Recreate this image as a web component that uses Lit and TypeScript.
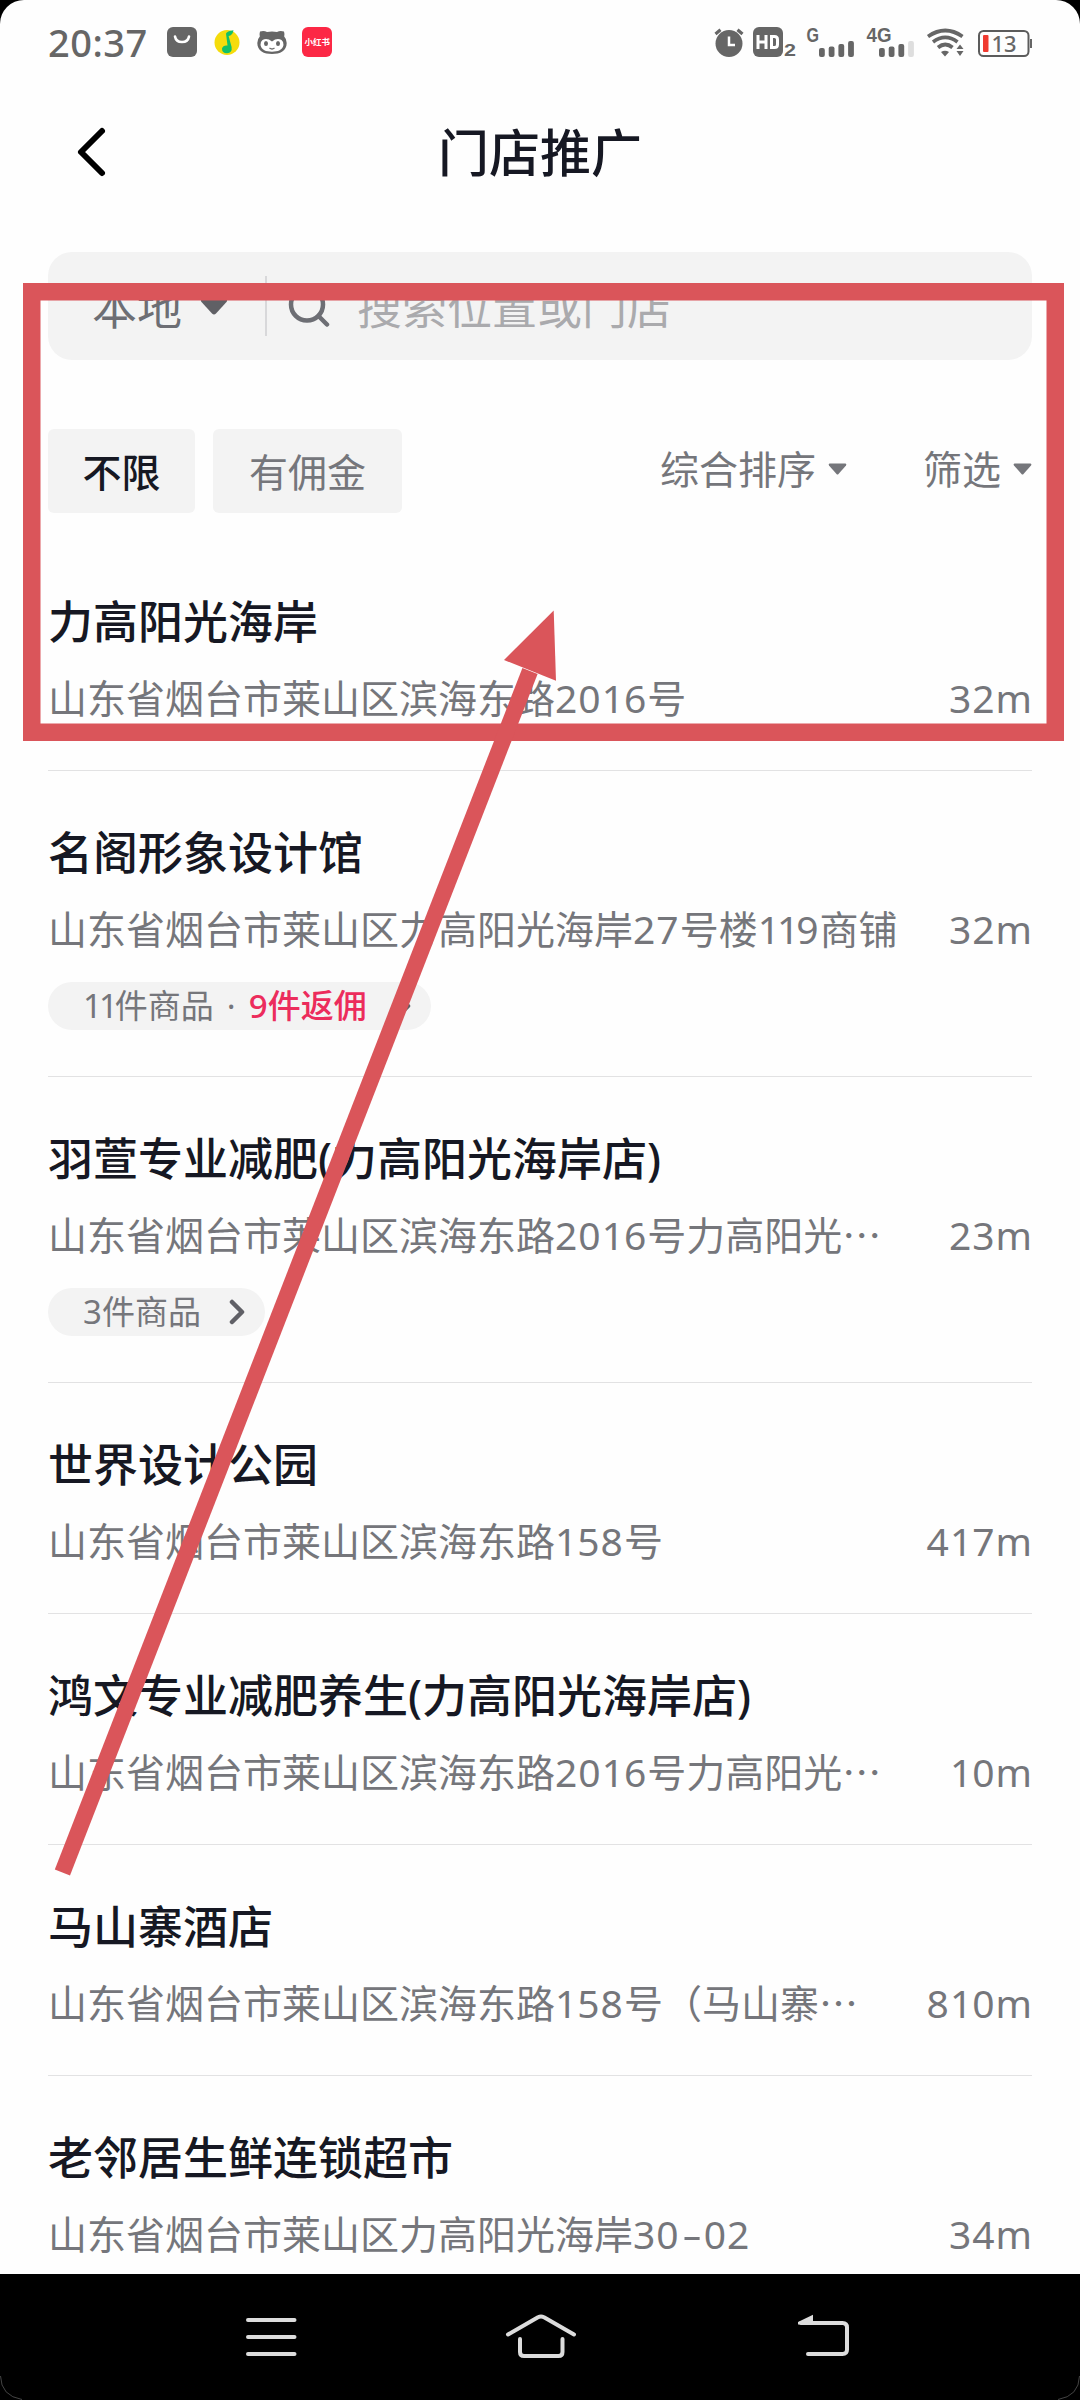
import { LitElement, html, css, svg, nothing } from "lit";
import { customElement, property } from "lit/decorators.js";

interface Store {
  name: string;
  address: string;
  truncated?: boolean;
  distance: string;
  goods?: string;
  rebate?: string;
}

const STORES: Store[] = [
  { name: "力高阳光海岸", address: "山东省烟台市莱山区滨海东路2016号", distance: "32m" },
  { name: "名阁形象设计馆", address: "山东省烟台市莱山区力高阳光海岸27号楼119商铺", distance: "32m", goods: "11件商品", rebate: "9件返佣" },
  { name: "羽萱专业减肥(力高阳光海岸店)", address: "山东省烟台市莱山区滨海东路2016号力高阳光", truncated: true, distance: "23m", goods: "3件商品" },
  { name: "世界设计公园", address: "山东省烟台市莱山区滨海东路158号", distance: "417m" },
  { name: "鸿文专业减肥养生(力高阳光海岸店)", address: "山东省烟台市莱山区滨海东路2016号力高阳光", truncated: true, distance: "10m" },
  { name: "马山寨酒店", address: "山东省烟台市莱山区滨海东路158号（马山寨", truncated: true, distance: "810m" },
  { name: "老邻居生鲜连锁超市", address: "山东省烟台市莱山区力高阳光海岸30-02", distance: "34m" },
];

/** Splits a string so that digit runs, paired ones and dashes get their own tracking. */
const tracked = (text: string) =>
  text.split(/(11|[02-9]+|-)/).filter(Boolean).map((part) =>
    part === "11" ? html`<span class="ones">${part}</span>`
      : part === "-" ? html`<span class="dash">${part}</span>`
        : /^[02-9]/.test(part) ? html`<span class="digits">${part}</span>`
          : part);

@customElement("status-bar")
class StatusBar extends LitElement {
  static styles = css`
    :host { display: flex; height: 84px; padding: 0 48px; align-items: center; justify-content: space-between; color: #666; box-sizing: border-box; }
    .left, .right { display: flex; align-items: center; }
    .time { font: 500 38px/60px "Noto Sans", sans-serif; letter-spacing: .5px; width: 119px; white-space: nowrap; }
    .icon { display: block; flex: none; }
    .t { font-family: "Liberation Sans", sans-serif; font-weight: 700; }
    .cjk { font-family: "Noto Sans CJK SC", sans-serif; font-weight: 700; }
    .pct { font-family: "Noto Sans", sans-serif; font-weight: 500; }
  `;
  render() {
    return html`
      <div class="left">
        <div class="time">20:37</div>
        <svg class="icon" width="165" height="30" viewBox="167 27 165 30">
          <rect x="167" y="27" width="30" height="30" rx="6" fill="#666" />
          <path d="M175 36.500Q176 42 182 42T189 36.500" fill="none" stroke="#fff" stroke-width="2.600" stroke-linecap="round" />
          <circle cx="227" cy="42.500" r="12.500" fill="#f5dc0c" />
          <path d="M226 33.500Q227 31 233.500 30.200Q232.500 35.500 228.600 36L231.600 47Q232.500 53 227 53.300Q221.700 53 222 48.500Q223 45 227.500 45.500Z" fill="#12c068" />
          <path d="M260 31.500Q264 30.200 267 32Q272 31 277 32Q280 30.200 284 31.500Q284.800 34 284.200 36.500Q286.700 39 286.700 43C286.700 51 280 54 272 54S257.300 51 257.300 43Q257.300 39 259.800 36.500Q259.200 34 260 31.500Z" fill="#666" />
          <path d="M272 41.500Q277 37.500 281.500 40Q284 42 283.500 45C282.500 50 278 51.700 272 51.700S261.500 50 260.500 45Q260 42 262.500 40Q267 37.500 272 41.500Z" fill="#fff" />
          <ellipse cx="266" cy="43.500" rx="2" ry="2.600" fill="#666" /><ellipse cx="278" cy="43.500" rx="2" ry="2.600" fill="#666" />
          <path d="M269.500 48Q272 50 274.500 48" fill="none" stroke="#666" stroke-width="1.300" />
          <rect x="302" y="27" width="30" height="30" rx="6" fill="#fc2845" />
          <text class="cjk" x="304.500" y="45.200" font-size="8.500" fill="#fff">小红书</text>
        </svg>
      </div>
      <div class="right">
        <svg class="icon" width="318" height="48" viewBox="714 18 318 48">
          <g fill="#666">
            <circle cx="729" cy="43.500" r="13.500" />
            <path d="M715.500 34L720.500 29.800M742.500 34L737.500 29.800" stroke="#666" stroke-width="3.200" />
            <path d="M729 36.500V45H735" fill="none" stroke="#fff" stroke-width="2.500" />
            <rect x="753" y="27" width="30" height="30" rx="6" />
            <path d="M758 35V49M766 35V49M758 42H766" stroke="#fff" stroke-width="3" />
            <path d="M771.500 36.500H774.500Q777.500 36.500 777.500 39.500V44.500Q777.500 47.500 774.500 47.500H771.500Z" fill="none" stroke="#fff" stroke-width="3" />
            <text class="t" x="784" y="56" font-size="16.500" textLength="12" lengthAdjust="spacingAndGlyphs">2</text>
            <text class="t" x="806.500" y="41.500" font-size="19.500" textLength="12.500" lengthAdjust="spacingAndGlyphs">G</text>
            <text class="t" x="866.500" y="41.500" font-size="19.500" textLength="25" lengthAdjust="spacingAndGlyphs">4G</text>
            ${[819, 879].map((x, n) => [9, 10.5, 13, 16].map((h, i) => svg`
              <rect x=${x + i * 9.7} y=${57 - h} width="5.800" height=${h} rx="2" fill=${n === 1 && i === 3 ? "#dedede" : "#666"} />`))}
            <g fill="none" stroke="#666" stroke-width="3.700">
              <path d="M928 36.500Q945.300 24.500 962.500 36.500" /><path d="M933 42Q945.300 32.800 957.500 42" /><path d="M938 47.500Q945.300 41.500 952.500 47.500" />
            </g>
            <path d="M941 52Q945 49.500 949 52L945 56.500ZM956.500 49L960 44.500L963.500 49ZM956.500 51L960 56L963.500 51Z" />
            <rect x="979" y="31" width="49.500" height="25" rx="4.500" fill="none" stroke="#5c5c5c" stroke-width="2" />
            <rect x="1030" y="39" width="2" height="9" />
            <rect x="983" y="35" width="5.500" height="17" rx="1" fill="#f03a30" />
            <text class="pct" x="991.500" y="52" font-size="22.500" textLength="25" lengthAdjust="spacingAndGlyphs">13</text>
          </g>
        </svg>
      </div>`;
  }
}

@customElement("store-row")
class StoreRow extends LitElement {
  @property({ attribute: false }) store!: Store;
  static styles = css`
    :host { display: flex; flex-direction: column; box-sizing: border-box; padding-top: 52px; margin: 0 48px; color: #75767b; }
    .name { font-size: 45px; line-height: 60px; font-weight: 500; color: #161823; white-space: nowrap; }
    .line { display: flex; justify-content: space-between; margin-top: 16px; font-size: 39px; line-height: 60px; height: 60px; white-space: nowrap; }
    .digits { letter-spacing: 1px; }
    .ones { letter-spacing: -3px; }
    .dash { display: inline-block; width: 24px; text-align: center; transform: scaleX(1.6); }
    .more { font-family: "Noto Sans CJK SC", sans-serif; line-height: 1; }
    .pill { display: flex; align-items: center; align-self: flex-start; box-sizing: border-box; height: 48px; margin-top: 23px; padding: 0 19px 0 35px; border-radius: 24px; background: #f3f3f3; font-size: 33px; line-height: 48px; white-space: nowrap; }
    .pill .digits { letter-spacing: 0; }
    .dot { width: 35px; text-align: center; }
    .rebate { color: #ec2c5c; font-weight: 500; }
    .arrow { margin-left: 28px; display: block; }
    .rule { height: 1px; background: #e2e2e3; margin-top: 42px; }
    .pill + .rule { margin-top: 46px; }
  `;
  render() {
    const s = this.store;
    return html`
      <div class="name">${s.name}</div>
      <div class="line"><span>${tracked(s.address)}${s.truncated ? html`<span class="more">…</span>` : nothing}</span><span>${tracked(s.distance)}</span></div>
      ${s.goods ? html`<div class="pill"><span>${tracked(s.goods)}</span>${s.rebate ? html`<span class="dot">·</span><span class="rebate">${s.rebate}</span>` : nothing}
        <svg class="arrow" width="17" height="26" viewBox="0 0 17 26"><path d="M3 3L13 13L3 23" fill="none" stroke="#606066" stroke-width="4.500" stroke-linecap="round" stroke-linejoin="round" /></svg></div>` : nothing}
      <div class="rule"></div>`;
  }
}

@customElement("app-root")
class AppRoot extends LitElement {
  static styles = css`
    :host { display: block; position: relative; width: 1080px; height: 2400px; overflow: hidden; background: #000; font-family: "Noto Sans", "Noto Sans CJK SC", sans-serif; }
    .phone { display: flex; flex-direction: column; height: 2400px; }
    .screen { height: 2274px; flex: none; overflow: hidden; background: #fefefe; border-radius: 24px 24px 0 0; }
    .header { display: grid; grid-template-columns: 160px 1fr 160px; height: 138px; align-items: center; }
    .back { margin-left: 76px; margin-bottom: 2px; display: block; }
    .title { font-size: 51px; line-height: 72px; margin-bottom: 2px; font-weight: 500; text-align: center; color: #161823; }
    .search { display: flex; align-items: center; height: 108px; margin: 30px 48px 0; padding-left: 44px; border-radius: 24px; background: #f3f3f3; box-sizing: border-box; font-size: 45px; line-height: 60px; color: #6d6e74; }
    .search span { padding-top: 3px; }
    .caret { display: block; margin-left: 18px; margin-top: 1px; }
    .split { width: 2px; height: 60px; margin-left: 37px; background: #d8d8da; }
    .lens { display: block; margin-left: 21px; margin-top: 1px; }
    .hint { margin-left: 27px; color: #aaaaad; }
    .filters { display: flex; align-items: center; height: 84px; margin: 69px 48px 0; font-size: 39px; line-height: 60px; color: #75767b; }
    .chip { box-sizing: border-box; height: 84px; line-height: 86px; border-radius: 6px; background: #f3f3f3; text-align: center; margin-right: 18px; }
    .all { width: 147px; color: #161823; font-weight: 500; }
    .paid { width: 189px; }
    .sort { display: flex; align-items: center; margin-left: auto; margin-bottom: 5px; }
    .sort + .sort { margin-left: 76px; }
    .tri { display: block; margin-left: 12px; }
    .list { display: block; margin-top: 27px; }
    .nav { height: 126px; flex: none; }
    .navicons, .marks { display: block; }
    .marks { position: absolute; left: 0; top: 0; pointer-events: none; }
  `;
  private tri() {
    return html`<svg class="tri" width="19" height="12" viewBox="0 0 19 12"><path d="M1.500 .500H17.500Q19 1 18 2.500L10.500 11Q9.500 12 8.500 11L1 2.500Q0 1 1.500 .500Z" fill="#75767b" /></svg>`;
  }
  render() {
    return html`
      <div class="phone">
        <div class="screen">
          <status-bar></status-bar>
          <div class="header">
            <svg class="back" width="32" height="52" viewBox="0 0 32 52"><path d="M26 5L5 26L26 47" fill="none" stroke="#000" stroke-width="6" stroke-linecap="round" stroke-linejoin="round" /></svg>
            <div class="title">门店推广</div>
          </div>
          <div class="search">
            <span>本地</span>
            <svg class="caret" width="28" height="16" viewBox="0 0 28 16"><path d="M2 0H26Q28 1 26.500 3L16 14.500Q14 16.500 12 14.500L1.500 3Q0 1 2 0Z" fill="#606065" /></svg>
            <div class="split"></div>
            <svg class="lens" width="42" height="42" viewBox="0 0 42 42"><g fill="none" stroke="#6d6e74" stroke-width="4.500" stroke-linecap="round"><circle cx="19" cy="18.500" r="16" /><path d="M30.500 30L39 38.500" /></g></svg>
            <span class="hint">搜索位置或门店</span>
          </div>
          <div class="filters">
            <div class="chip all">不限</div><div class="chip paid">有佣金</div>
            <div class="sort">综合排序${this.tri()}</div><div class="sort">筛选${this.tri()}</div>
          </div>
          <div class="list">${STORES.map((s) => html`<store-row .store=${s}></store-row>`)}</div>
        </div>
        <div class="nav">
          <svg class="navicons" width="1080" height="126" viewBox="0 2274 1080 126">
            <g fill="none" stroke="#dcdcdc" stroke-width="4" stroke-linecap="round" stroke-linejoin="round">
              <path d="M248 2320H294.500M248 2337H294.500M248 2354H294.500" />
              <path d="M508 2334.500L538 2317.200Q541 2315.800 544 2317.200L574 2334.500M520 2339V2352Q520 2356 524 2356H558.500Q562.500 2356 562.500 2352V2339" />
              <path d="M808 2354H842.500Q847 2354 847 2349.500V2327.500Q847 2323 842.500 2323H801" />
            </g>
            <path d="M798 2324.500V2322L813 2314.700V2324.500Z" fill="#dcdcdc" />
            <path d="M.5 2376Q1 2396 22 2399.500M1079.500 2376Q1079 2396 1058 2399.500" fill="none" stroke="#444" />
          </svg>
        </div>
      </div>
      <svg class="marks" width="1080" height="2400" viewBox="0 0 1080 2400">
        <rect x="31.750" y="291.750" width="1023.500" height="440.500" fill="none" stroke="#da555a" stroke-width="17.500" />
        <path d="M62.400 1872.500L530 671" stroke="#da555a" stroke-width="16.300" />
        <path d="M553.700 610.500L504 660L556 680.700Z" fill="#da555a" />
      </svg>`;
  }
}
